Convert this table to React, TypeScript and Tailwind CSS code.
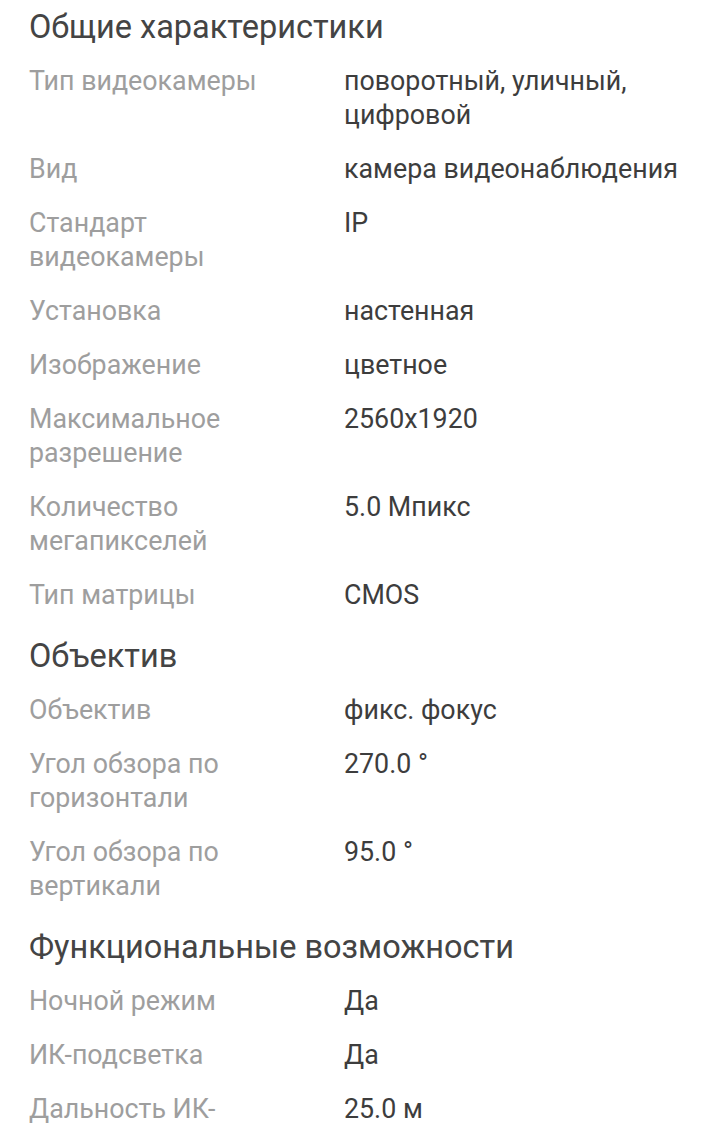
import React from "react";

type Row = [string, string];

interface Section {
  title: string;
  rows: Row[];
}

const sections: Section[] = [
  {
    title: "Общие характеристики",
    rows: [
      ["Тип видеокамеры", "поворотный, уличный, цифровой"],
      ["Вид", "камера видеонаблюдения"],
      ["Стандарт видеокамеры", "IP"],
      ["Установка", "настенная"],
      ["Изображение", "цветное"],
      ["Максимальное разрешение", "2560x1920"],
      ["Количество мегапикселей", "5.0 Мпикс"],
      ["Тип матрицы", "CMOS"],
    ],
  },
  {
    title: "Объектив",
    rows: [
      ["Объектив", "фикс. фокус"],
      ["Угол обзора по горизонтали", "270.0 °"],
      ["Угол обзора по вертикали", "95.0 °"],
    ],
  },
  {
    title: "Функциональные возможности",
    rows: [
      ["Ночной режим", "Да"],
      ["ИК-подсветка", "Да"],
      ["Дальность ИК-подсветки", "25.0 м"],
    ],
  },
];

export default function App() {
  return (
    <div className="min-h-screen bg-white pl-[29px] pr-[30px] pt-[7px] font-['Roboto',sans-serif]">
      {sections.map((section, i) => (
        <div key={section.title} className={i > 0 ? "mt-[14px]" : ""}>
          {/* Section title */}
          <h2 className="text-[32.5px] leading-[40px] text-[#444444] mb-[7px]">
            {section.title}
          </h2>

          {section.rows.map(([label, value]) => (
            <div key={label} className="flex py-[10px] text-[26.8px] leading-[34px]">
              <div className="w-[280px] shrink-0 text-[#9e9e9e]">{label}</div>
              <div className="ml-[35px] flex-1 text-[#3d3d3d]">{value}</div>
            </div>
          ))}
        </div>
      ))}
    </div>
  );
}
